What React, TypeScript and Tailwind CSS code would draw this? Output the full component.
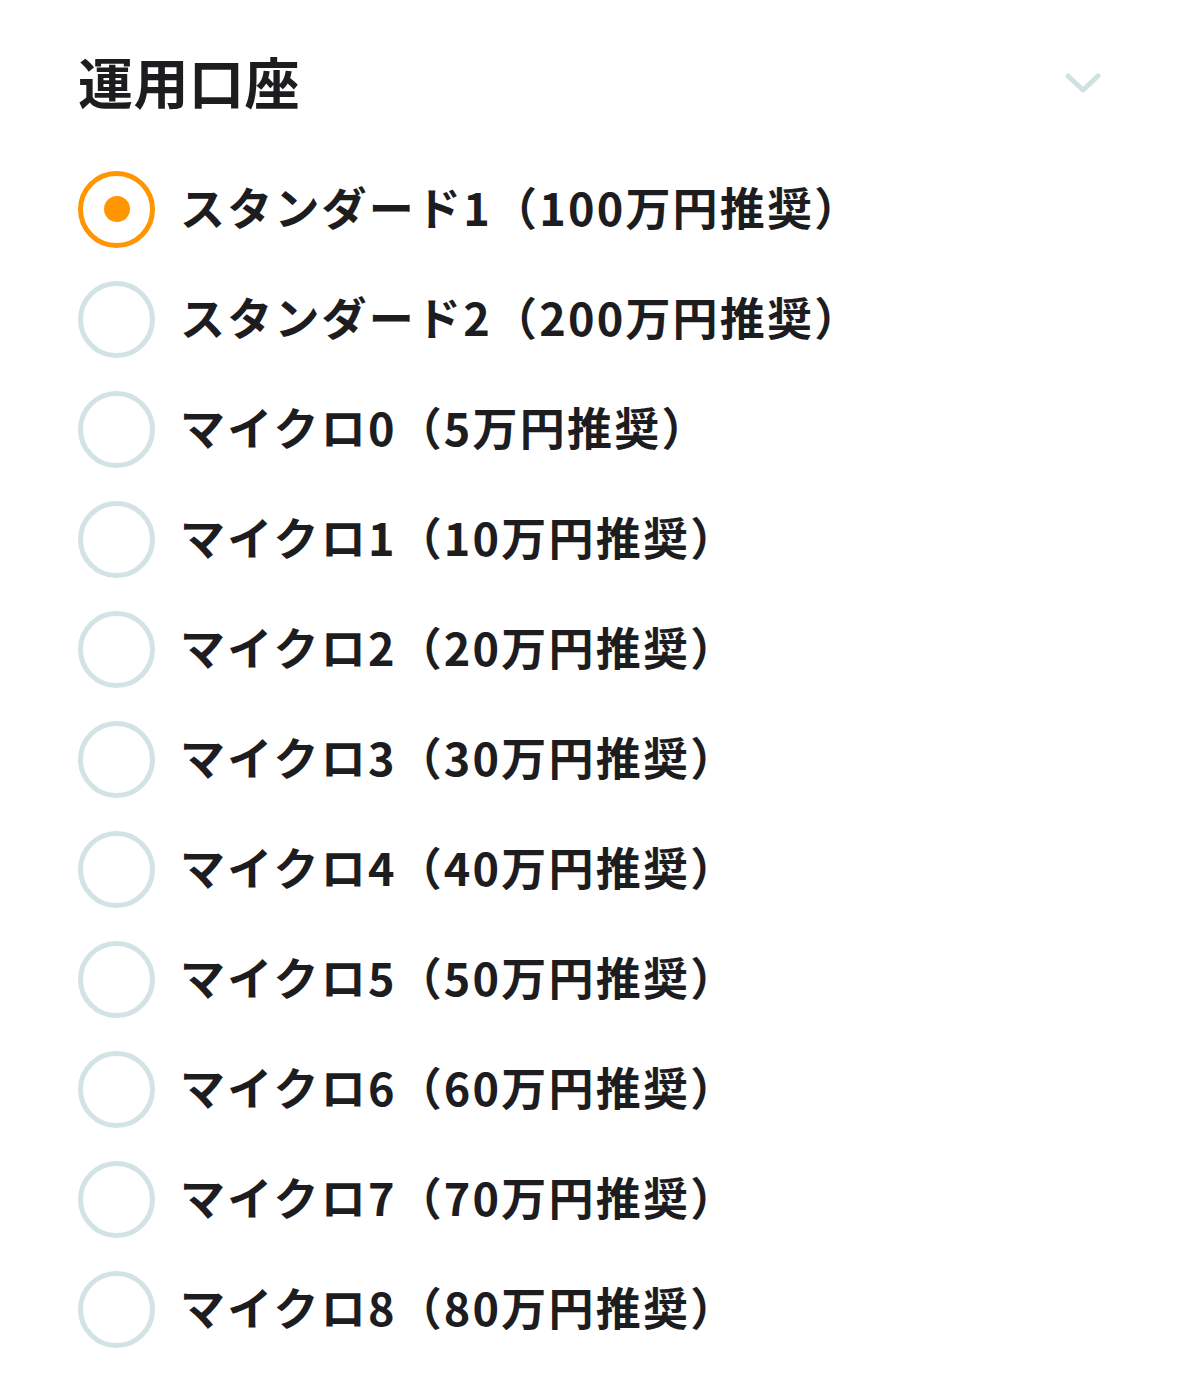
import React, { useState } from 'react';

const options = [
  'スタンダード1（100万円推奨）',
  'スタンダード2（200万円推奨）',
  'マイクロ0（5万円推奨）',
  'マイクロ1（10万円推奨）',
  'マイクロ2（20万円推奨）',
  'マイクロ3（30万円推奨）',
  'マイクロ4（40万円推奨）',
  'マイクロ5（50万円推奨）',
  'マイクロ6（60万円推奨）',
  'マイクロ7（70万円推奨）',
  'マイクロ8（80万円推奨）',
];

function Radio({ checked }: { checked: boolean }) {
  return (
    <span
      className={
        checked
          ? 'flex h-[77px] w-[77px] shrink-0 items-center justify-center rounded-full border-[5px] border-[#ff9500]'
          : 'flex h-[77px] w-[77px] shrink-0 items-center justify-center rounded-full border-[5px] border-[#d3e2e5]'
      }
    >
      {checked && <span className="h-[26px] w-[26px] rounded-full bg-[#ff9500]" />}
    </span>
  );
}

export default function App() {
  const [selected, setSelected] = useState(0);

  return (
    <div
      className="min-h-[1395px] w-[1200px] bg-white pl-[78px] pr-[98px] pt-[53px] text-[#1d1d1f]"
      style={{ fontFamily: '"Noto Sans CJK JP", "Noto Sans", sans-serif' }}
    >
      <div className="flex items-center justify-between">
        <h2 className="text-[55px] font-bold leading-none tracking-[0.5px]">運用口座</h2>
        <svg width="38" height="22" viewBox="0 0 38 22" fill="none" className="mt-[4px]">
          <path d="M4 4 L19 18 L34 4" stroke="#d0e1e4" strokeWidth="5" strokeLinecap="round" strokeLinejoin="round" />
        </svg>
      </div>
      <div className="mt-[46px] flex flex-col">
        {options.map((label, i) => (
          <button
            key={label}
            onClick={() => setSelected(i)}
            className="flex h-[110px] items-center gap-[25px] text-left"
          >
            <Radio checked={selected === i} />
            <span className="pb-[6px] text-[45px] font-bold leading-none tracking-[2.2px]">{label}</span>
          </button>
        ))}
      </div>
    </div>
  );
}
